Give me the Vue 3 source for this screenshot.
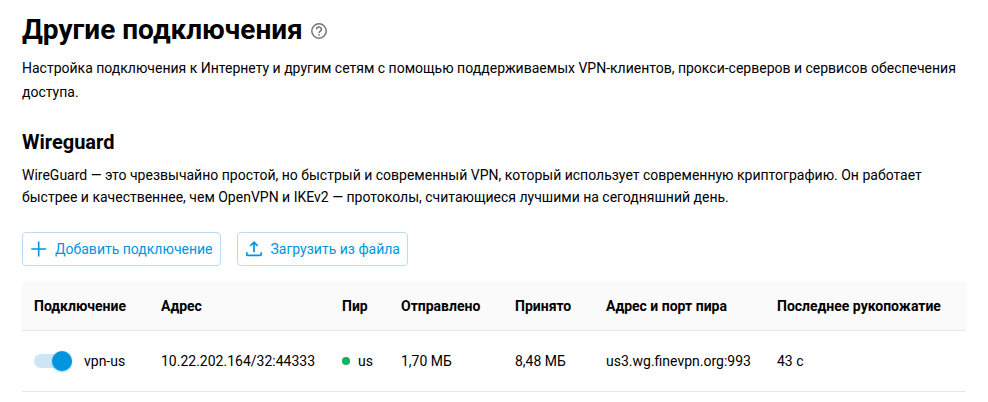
<script setup>
import { ref } from 'vue'

const connections = ref([
  {
    id: 'vpn-us',
    enabled: true,
    address: '10.22.202.164/32:44333',
    peer: 'us',
    sent: '1,70 МБ',
    received: '8,48 МБ',
    endpoint: 'us3.wg.finevpn.org:993',
    handshake: '43 с',
  },
])
</script>

<template>
  <main class="page">
    <header class="heading">
      <h1>Другие подключения</h1>
      <button class="help" type="button" aria-label="Справка">
        <svg width="16" height="16" viewBox="0 0 16 16" fill="none" stroke="currentColor" stroke-width="1.5">
          <circle cx="8" cy="8" r="7.2" />
          <path d="M5.6 6.4a2.4 2.3 0 1 1 3.7 1.8C8.5 8.8 8 9.1 8 10" />
          <path d="M8 11.1v1.5" />
        </svg>
      </button>
    </header>
    <p class="intro">
      Настройка подключения к Интернету и другим сетям с помощью поддерживаемых VPN-клиентов, прокси-серверов и сервисов обеспечения доступа.
    </p>

    <section>
      <h2>Wireguard</h2>
      <p class="about">
        WireGuard — это чрезвычайно простой, но быстрый и современный VPN, который использует современную криптографию. Он работает быстрее и качественнее, чем OpenVPN и IKEv2 — протоколы, считающиеся лучшими на сегодняшний день.
      </p>

      <div class="actions">
        <button class="action" type="button">
          <svg width="16" height="16" viewBox="0 0 16 16" fill="none" stroke="currentColor" stroke-width="1.6">
            <path d="M7.7 .6v14.8M.3 8h14.8" />
          </svg>
          Добавить подключение
        </button>
        <button class="action" type="button">
          <svg width="17" height="16" viewBox="0 0 17 16" fill="none" stroke="currentColor" stroke-width="1.7">
            <path d="M8 11.2V1.8M4.4 4.8L8 1.2l3.6 3.6" />
            <path d="M.8 11.3v2.2q0 .9 .9 .9h12.6q.9 0 .9-.9v-2.2" />
          </svg>
          Загрузить из файла
        </button>
      </div>

      <table>
        <colgroup>
          <col class="c-name" />
          <col class="c-address" />
          <col class="c-peer" />
          <col class="c-sent" />
          <col class="c-received" />
          <col class="c-endpoint" />
          <col class="c-handshake" />
        </colgroup>
        <thead>
          <tr>
            <th scope="col">Подключение</th>
            <th scope="col">Адрес</th>
            <th scope="col">Пир</th>
            <th scope="col">Отправлено</th>
            <th scope="col">Принято</th>
            <th scope="col">Адрес и порт пира</th>
            <th scope="col">Последнее рукопожатие</th>
          </tr>
        </thead>
        <tbody>
          <tr v-for="c in connections" :key="c.id">
            <td>
              <label class="toggle">
                <input v-model="c.enabled" type="checkbox" role="switch" />
                <span>{{ c.id }}</span>
              </label>
            </td>
            <td>{{ c.address }}</td>
            <td><span class="peer">{{ c.peer }}</span></td>
            <td>{{ c.sent }}</td>
            <td>{{ c.received }}</td>
            <td>{{ c.endpoint }}</td>
            <td>{{ c.handshake }}</td>
          </tr>
        </tbody>
      </table>
    </section>
  </main>
</template>

<style>
body {
  background: #fff;
}
</style>

<style scoped>
.page {
  padding: 12px 22px 8px;
  font-family: Roboto, "Liberation Sans", sans-serif;
  font-size: 14px;
  color: #000;
}

.heading {
  display: flex;
  align-items: center;
  gap: 8px;
}

h1,
h2,
p {
  margin: 0;
}

h1 {
  font-size: 28px;
  line-height: 36px;
  font-weight: 700;
}

.help {
  display: flex;
  padding: 2px 0 0;
  border: 0;
  background: none;
  color: #757575;
}

.intro {
  margin-top: 8px;
  line-height: 24px;
}

h2 {
  margin-top: 24px;
  font-size: 20px;
  line-height: 28px;
  font-weight: 700;
}

.about {
  margin-top: 8px;
  line-height: 22px;
}

.actions {
  display: flex;
  gap: 16px;
  margin: 24px 0 16px;
}

.action {
  display: flex;
  align-items: center;
  gap: 8px;
  height: 34px;
  padding: 0 7px 0 8px;
  border: 1px solid #b9dcf0;
  border-radius: 4px;
  background: #fff;
  color: #0095dd;
  font: inherit;
}

table {
  width: 100%;
  table-layout: fixed;
  border-collapse: separate;
  border-spacing: 0;
}

.c-name { width: 127px; }
.c-address { width: 181px; }
.c-peer { width: 59px; }
.c-sent { width: 114px; }
.c-received { width: 91px; }
.c-endpoint { width: 171px; }
.c-handshake { width: 201px; }

th,
td {
  padding: 0 0 0 12px;
  border-bottom: 1px solid #e6e6e6;
  text-align: left;
  white-space: nowrap;
}

th {
  height: 48px;
  background: #fafafa;
  font-weight: 700;
}

td {
  height: 60px;
}

.toggle {
  display: flex;
  align-items: center;
  gap: 12px;
}

.toggle input {
  appearance: none;
  display: flex;
  align-items: center;
  width: 38px;
  height: 14px;
  margin: 0;
  border-radius: 7px;
  background: #dcdcdc;
}

.toggle input::before {
  content: "";
  flex: none;
  width: 20px;
  height: 20px;
  border-radius: 50%;
  background: #fff;
  box-shadow: 0 1px 2px rgba(0, 0, 0, 0.3);
}

.toggle input:checked {
  justify-content: flex-end;
  background: #cce6f6;
}

.toggle input:checked::before {
  background: #0095dd;
  box-shadow: 0 1px 2px rgba(0, 149, 221, 0.5);
}

.peer {
  display: flex;
  align-items: center;
  gap: 8px;
}

.peer::before {
  content: "";
  width: 8px;
  height: 8px;
  border-radius: 50%;
  background: #0eb35c;
}
</style>
